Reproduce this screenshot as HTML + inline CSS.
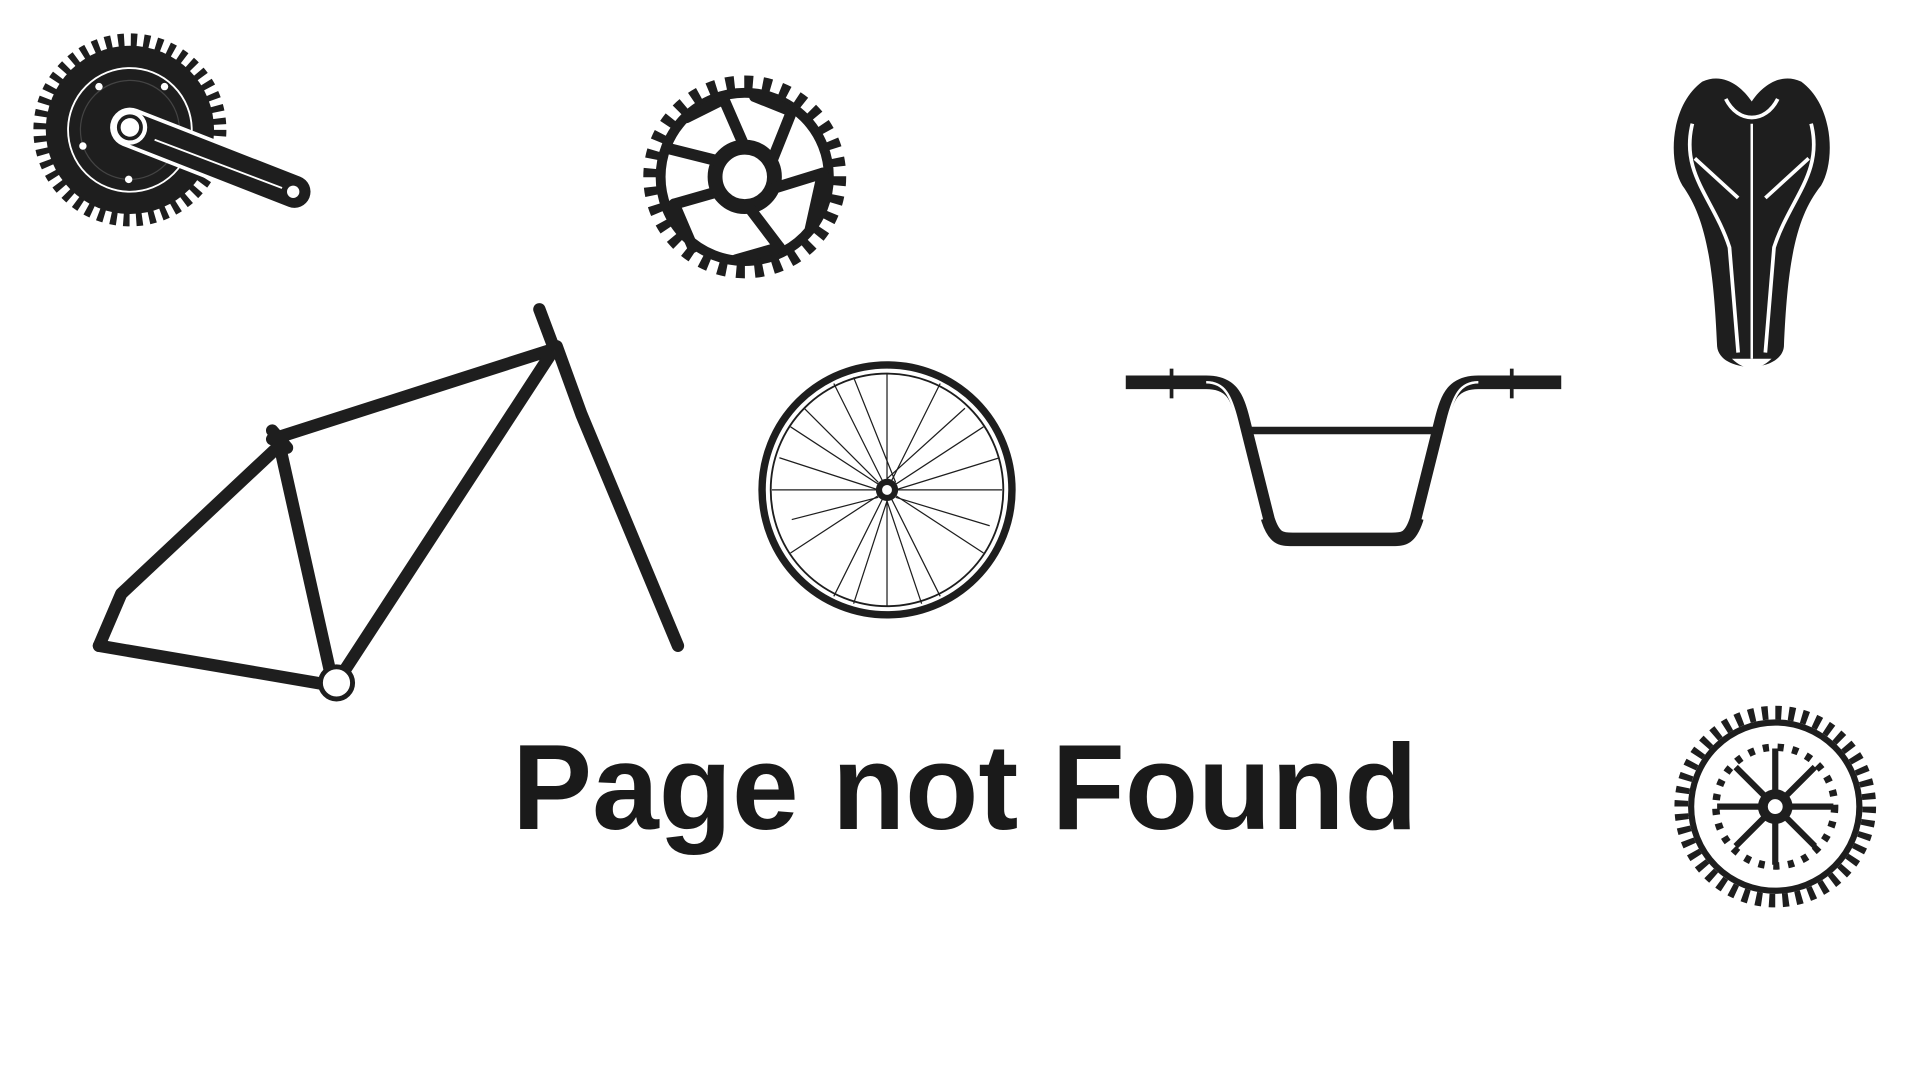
<!DOCTYPE html>
<html><head><meta charset="utf-8"><style>
html,body{margin:0;padding:0;background:#fff;width:1920px;height:1080px;overflow:hidden}
svg{display:block}
</style></head><body>
<svg width="1920" height="1080" viewBox="0 0 1552 873" preserveAspectRatio="none" xmlns="http://www.w3.org/2000/svg">
<g fill="none" stroke="#1e1e1e">
<!-- crankset -->
<circle cx="105" cy="105" r="72" stroke-width="12" stroke-dasharray="5 5.3"/>
<circle cx="105" cy="105" r="68" fill="#1e1e1e" stroke="none"/>
<circle cx="105" cy="105" r="50" stroke="#fff" stroke-width="1.5"/>
<circle cx="105" cy="105" r="40" stroke="#444" stroke-width="1"/>
<line x1="105" y1="103" x2="238" y2="155" stroke="#fff" stroke-width="32" stroke-linecap="round"/>
<line x1="105" y1="103" x2="238" y2="155" stroke-width="26" stroke-linecap="round"/>
<line x1="125" y1="113" x2="228" y2="152" stroke="#fff" stroke-width="1.5"/>
<circle cx="105" cy="103" r="14" fill="#fff" stroke="none"/>
<circle cx="105" cy="103" r="9" stroke-width="3"/>
<circle cx="237" cy="155" r="5" fill="#fff" stroke="none"/>
<g fill="#fff" stroke="none"><circle cx="80" cy="70" r="3"/><circle cx="133" cy="70" r="3"/><circle cx="67" cy="118" r="3"/><circle cx="104" cy="145" r="3"/></g>
<!-- chainring -->
<circle cx="602" cy="143" r="76" stroke-width="12" stroke-dasharray="7 7.9"/>
<circle cx="602" cy="143" r="68" stroke-width="8"/>
<circle cx="602" cy="143" r="24" stroke-width="12"/>
<g stroke-width="9" stroke-linecap="round">
<line x1="602" y1="119" x2="585" y2="80"/><line x1="585" y1="80" x2="555" y2="95"/>
<line x1="624" y1="130" x2="640" y2="90"/><line x1="640" y1="90" x2="610" y2="78"/>
<line x1="626" y1="152" x2="665" y2="140"/><line x1="665" y1="140" x2="655" y2="185"/>
<line x1="605" y1="167" x2="630" y2="200"/><line x1="630" y1="200" x2="595" y2="210"/>
<line x1="580" y1="155" x2="545" y2="165"/><line x1="545" y1="165" x2="560" y2="200"/>
<line x1="580" y1="130" x2="540" y2="120"/>
</g>
<!-- saddle -->
<path d="M1376 66 C1393 58 1408 70 1416 82 C1424 70 1439 58 1456 66 C1482 85 1484 130 1472 150 C1452 175 1445 210 1442 280 C1440 302 1390 302 1388 280 C1385 210 1378 175 1360 150 C1348 130 1350 85 1376 66 Z" fill="#1e1e1e" stroke="none"/>
<g stroke="#fff" stroke-width="3"><path d="M1368 100 C1358 140 1385 160 1398 200 L1405 285"/><path d="M1464 100 C1474 140 1447 160 1434 200 L1427 285"/><path d="M1416 100 L1416 290" stroke-width="2"/><path d="M1395 80 C1405 100 1427 100 1437 80"/><path d="M1370 128 L1405 160"/><path d="M1462 128 L1427 160"/></g>
<path d="M1400 290 C1410 300 1422 300 1432 290 Z" fill="#fff" stroke="none"/>
<!-- frame -->
<g stroke-width="10" stroke-linecap="round" stroke-linejoin="round">
<path d="M220 355 L448 282 L436 250"/>
<path d="M448 282 L272 552"/>
<path d="M226 360 L268 548"/>
<path d="M226 360 L98 480 L80 522"/>
<path d="M80 522 L268 554"/>
<path d="M450 280 L470 335 L548 522"/>
<path d="M220 348 L232 362"/>
</g>
<circle cx="272" cy="552" r="13" fill="#fff" stroke-width="4"/>
<!-- wheel -->
<circle cx="717" cy="396" r="101" stroke-width="6"/>
<circle cx="717" cy="396" r="94" stroke-width="1.5"/>
<g stroke-width="1">
<path d="M717 396 L717 302 M717 396 L760 310 M717 396 L795 345 M717 396 L810 396 M717 396 L795 447 M717 396 L760 482 M717 396 L717 490 M717 396 L674 482 M717 396 L639 447 M717 396 L624 396 M717 396 L639 345 M717 396 L674 310"/>
<path d="M710 390 L650 330 M724 390 L690 305 M724 402 L800 425 M710 402 L640 420 M717 405 L745 488 M717 387 L780 330 M717 405 L690 488 M710 396 L630 370 M724 396 L808 370"/>
</g>
<circle cx="717" cy="396" r="9" fill="#1e1e1e" stroke="none"/>
<circle cx="717" cy="396" r="4" fill="#fff" stroke="none"/>
<!-- handlebar -->
<path d="M910 309 L975 309 C995 309 1000 320 1005 340 L1025 420 C1030 435 1035 436 1045 436 L1125 436 C1135 436 1140 435 1145 420 L1165 340 C1170 320 1175 309 1195 309 L1262 309" stroke-width="11" stroke-linejoin="round"/>
<path d="M975 309 C990 309 995 320 1000 340 L1020 420 M1150 420 L1170 340 C1175 320 1180 309 1195 309" stroke="#fff" stroke-width="2"/>
<line x1="1008" y1="348" x2="1162" y2="348" stroke-width="6"/>
<line x1="947" y1="298" x2="947" y2="322" stroke-width="3"/>
<line x1="1222" y1="298" x2="1222" y2="322" stroke-width="3"/>
<!-- bottom right gear -->
<circle cx="1435" cy="652" r="76" stroke-width="11" stroke-dasharray="5 5.85"/>
<circle cx="1435" cy="652" r="68" stroke-width="5"/>
<circle cx="1435" cy="652" r="48" stroke-width="6" stroke-dasharray="5 7"/>
<g stroke-width="5"><path d="M1435 652 L1435 605 M1435 652 L1467 620 M1435 652 L1482 652 M1435 652 L1467 684 M1435 652 L1435 699 M1435 652 L1403 684 M1435 652 L1388 652 M1435 652 L1403 620"/></g>
<circle cx="1435" cy="652" r="14" fill="#1e1e1e" stroke="none"/>
<circle cx="1435" cy="652" r="6" fill="#fff" stroke="none"/>
</g>
<text x="414" y="670" font-family="Liberation Sans, sans-serif" font-weight="bold" font-size="98" fill="#1a1a1a" textLength="732" lengthAdjust="spacingAndGlyphs">Page not Found</text>
</svg>
</body></html>
